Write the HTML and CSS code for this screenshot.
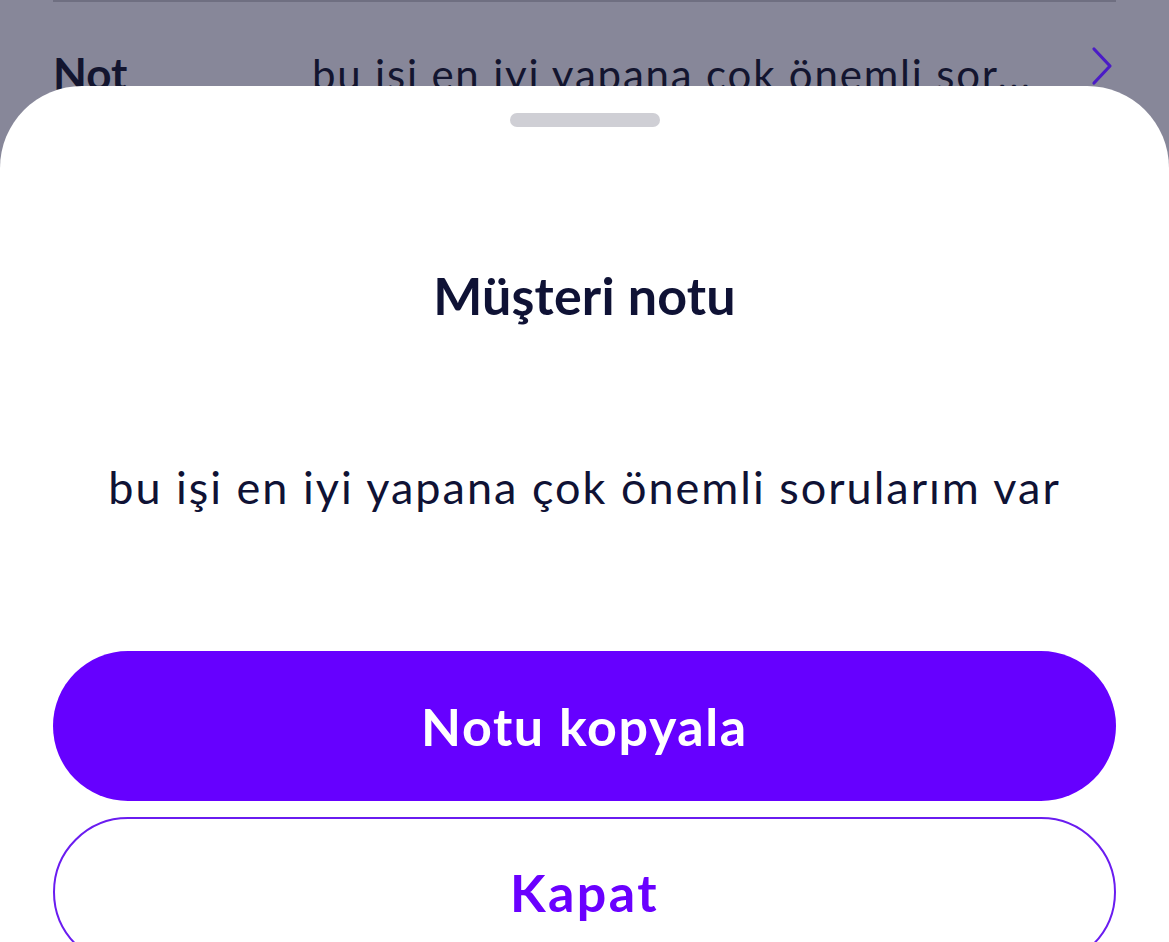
FILE: index.html
```html
<!DOCTYPE html>
<html lang="tr">
<head>
    <meta charset="UTF-8">
    <meta name="viewport" content="width=device-width, initial-scale=1.0">
    <title>Müşteri notu</title>
    <link rel="stylesheet" href="styles.css">
</head>
<body>
    <div class="page">
        <div class="divider"></div>
        <div class="detail-row">
            <span class="detail-label">Not</span>
            <span class="detail-value">bu işi en iyi yapana çok önemli sor...</span>
            <svg class="chevron" width="22" height="40" viewBox="0 0 22 40">
                <path d="M3 3 L19 20 L3 37" fill="none" stroke="currentColor" stroke-width="3.2" stroke-linecap="round" stroke-linejoin="round"/>
            </svg>
        </div>
    </div>

    <div class="sheet">
        <div class="handle"></div>
        <h2 class="sheet-title">Müşteri notu</h2>
        <p class="sheet-text">bu işi en iyi yapana çok önemli sorularım var</p>
        <button class="btn btn-primary">Notu kopyala</button>
        <button class="btn btn-outline">Kapat</button>
    </div>
</body>
</html>
```

FILE: styles.css
```css
body {
    margin: 0;
    height: 942px;
    overflow: hidden;
    background-color: #878799;
    font-family: Lato, "Open Sans", sans-serif;
    color: #0f1235;
}
.page {
    padding: 0 53px;
}
.divider {
    height: 2px;
    background-color: #6f6f81;
}
.detail-row {
    display: flex;
    align-items: baseline;
    margin-top: 49px;
    color: #13152f;
}
.detail-label {
    width: 259px;
    font-size: 44px;
    font-weight: 700;
    line-height: 44px;
}
.detail-value {
    flex: 1;
    font-size: 42px;
    line-height: 44px;
    letter-spacing: 1.8px;
}
.chevron {
    align-self: flex-start;
    margin-top: -5px;
    margin-right: 3px;
    color: #4b1cc6;
}
.sheet {
    position: absolute;
    top: 86px;
    left: 0;
    right: 0;
    height: 1000px;
    background-color: #fff;
    border-radius: 82px 82px 0 0;
    padding: 27px 53px 0;
    display: flex;
    flex-direction: column;
    align-items: center;
}
.handle {
    width: 150px;
    height: 14px;
    border-radius: 7px;
    background-color: #cfcfd5;
}
.sheet-title {
    margin: 142px 0 0;
    font-size: 52px;
    line-height: 52px;
    font-weight: 700;
    letter-spacing: 0.2px;
}
.sheet-text {
    margin: 144px 0 0;
    font-size: 45px;
    line-height: 45px;
    letter-spacing: 2px;
}
.btn {
    width: 100%;
    height: 150px;
    border-radius: 75px;
    font-family: inherit;
    font-size: 52px;
    font-weight: 700;
    letter-spacing: 1.6px;
    cursor: pointer;
}
.btn-primary {
    margin-top: 141px;
    border: none;
    background-color: #6600ff;
    color: #fff;
}
.btn-outline {
    margin-top: 16px;
    border: 2px solid #6a1cf0;
    background-color: #fff;
    color: #6a00ff;
    letter-spacing: 2.4px;
}
```
